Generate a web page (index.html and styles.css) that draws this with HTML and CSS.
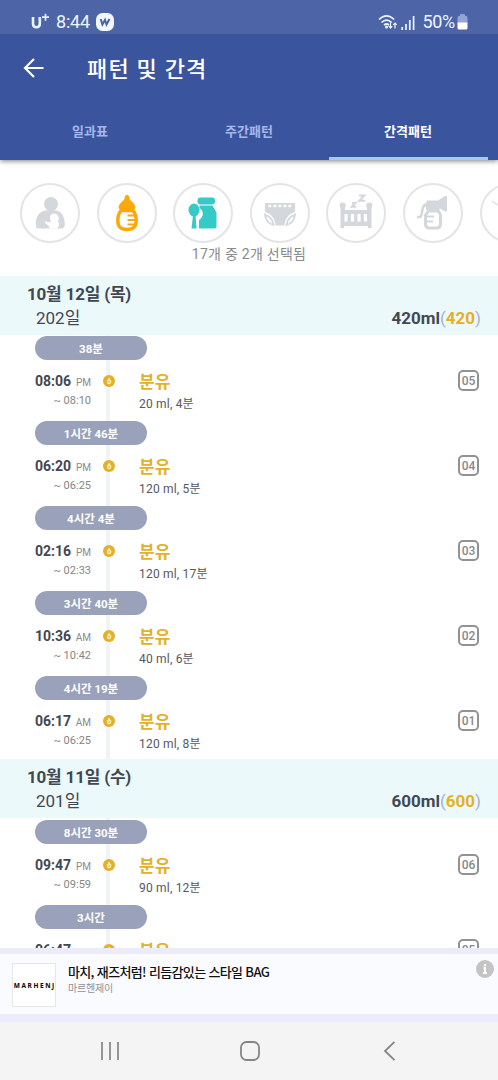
FILE: index.html
```html
<!DOCTYPE html>
<html lang="ko">
<head>
<meta charset="utf-8">
<title>패턴 및 간격</title>
<link rel="stylesheet" href="styles.css">
</head>
<body>
<svg class="defs" width="0" height="0">
  <symbol id="drop" viewBox="0 0 12 12"><circle cx="6" cy="6" r="6" fill="#e3b02a"/><path d="M5.7 2.7h.8l.3 1.5c1.1.5 1.5 1.3 1.5 2.4 0 1.7-.8 2.6-2.2 2.6S4 8.300 4 6.700c0-1.200.4-1.900 1.400-2.500z" fill="#fff3c4"/><path d="M5.400 5.800h1.400v1.900H5.400z" fill="#e3b02a"/></symbol>
</svg>
<div class="screen">
  <div class="status">
    <svg class="carrier" width="20" height="18" viewBox="0 0 20 18" fill="none" stroke="#e8f4ff"><path d="M2 4v6.500c0 2.600 1.300 3.800 3.400 3.800s3.400-1.200 3.400-3.800V4" stroke-width="2.600"/><path d="M11 4.200h7M14.500.7v7" stroke-width="1.700"/></svg>
    <span class="clock">8:44</span>
    <svg class="wapp" width="18" height="18" viewBox="0 0 18 18"><rect width="18" height="18" rx="6.500" fill="#f2f6ff"/><path d="M4.700 6l1.700 5.500L9 7l1.500 4.500L13.500 6" fill="none" stroke="#4c62a4" stroke-width="2"/></svg>
    <svg class="wifi" width="20" height="17" viewBox="0 0 20 17" fill="none" stroke="#eaf5ff" stroke-width="1.700"><path d="M1 5.500Q8.500-1.800 16.200 5.500M3.500 8.500Q8.500 3.700 13.700 8.500M6 11.200Q8.500 8.800 11 11.200"/><circle cx="8.500" cy="13" r=".7"/><path d="M12.500 8.500V14M10.800 12.200l1.700 1.900 1.700-1.900M17 14.500V9M15.200 10.800L17 9l1.800 1.800" stroke-width="1.200"/></svg>
    <svg class="signal" width="14" height="15" viewBox="0 0 14 15" stroke="#eaf5ff" stroke-width="1.700"><path d="M1.200 12v3M5 9v6M8.800 5v10M12.600 1v14"/></svg>
    <span class="percent">50%</span>
    <svg width="11" height="16" viewBox="0 0 11 16"><path d="M3 2V1q0-1 1-1h3q1 0 1 1v1h1q1.500 0 1.500 1.500V9H.5V3.500Q.5 2 2 2z" fill="#94a4d0"/><path d="M.5 8.500h10V14q0 1.500-1.500 1.500H2Q.5 15.500.5 14z" fill="#fff"/></svg>
  </div>
  <header class="appbar">
    <div class="title-row">
      <svg width="22" height="22" viewBox="0 0 22 22" fill="none" stroke="#fff" stroke-width="2.200"><path d="M20.500 11H2.500M11 2L2 11l9 9"/></svg>
      <h1>패턴 및 간격</h1>
    </div>
    <nav class="tabs"><span>일과표</span><span>주간패턴</span><span class="active">간격패턴</span></nav>
  </header>
  <section class="filters">
    <div class="circles">
      <div class="circle"><svg viewBox="0 0 60 60"><g fill="#d4d7db"><circle cx="31" cy="21" r="7"/><path d="M31 27c-9 0-14 3-15 11-.7 5 0 7.500 3 7.500h22c3.500 0 4.300-2 3.500-7.500-1.200-8-5-11-13.500-11z"/></g><path d="M25 37.500q3 3 6 1c-2-4-1-8 3-8s6 4 4 8c2 2 1 5-1 7H29c1-3-1-3-3.500-5z" fill="#fff"/></svg></div>
      <div class="circle"><svg viewBox="0 0 60 60"><path d="M27.500 15.500Q27.500 12 30 12t2.500 3.500c0 2 6 4.500 6 9.500l-2 2h-13l-2-2c0-5 6-7.500 6-9.500z" fill="#faa80a"/><path d="M24 27.500h12c2 2.500 3.200 6 3.200 10 0 6-2.200 9-9.200 9s-9.200-3-9.200-9c0-4 1.200-7.500 3.200-10z" fill="#fff" stroke="#faa80a" stroke-width="3.500"/><path d="M30.500 32.500H38M30.500 37H39M30.500 41.500H38" stroke="#faa80a" stroke-width="2"/></svg></div>
      <div class="circle"><svg viewBox="0 0 60 60" fill="#35c9c7"><rect x="24.500" y="14.500" width="17.500" height="7" rx="3"/><path d="M26.500 22.500h13l4 7v14q0 2-2 2H26V37c5-3 5-9 .5-12z"/><ellipse cx="21" cy="27" rx="5.500" ry="6.500"/><path d="M20 32h2.500l1 13.500h-5z"/></svg></div>
      <div class="circle"><svg viewBox="0 0 60 60"><path d="M15 20h30v9c-7 2-10 7-10.500 13.500h-9C25 36 22 31 15 29z" fill="#d4d7db"/><path d="M15 31.500c5 2 8 5.500 8.500 10.500-5-1.500-8-5-8.500-10.500zM45 31.500c-5 2-8 5.500-8.500 10.500 5-1.500 8-5 8.500-10.500z" fill="#fff" stroke="#d4d7db" stroke-width="1.800"/><path d="M18.500 23h23.500" stroke="#fff" stroke-width="2.600" stroke-dasharray="2.800 2.200"/></svg></div>
      <div class="circle"><svg viewBox="0 0 60 60"><g fill="#d4d7db"><path d="M14.500 22H19v5h22v-5h4.500v23H42v-2H18v2h-3.500z"/><circle cx="16.700" cy="22.500" r="3"/><circle cx="43.300" cy="22.500" r="3"/></g><path d="M20 31v7.500M26.500 31v7.500M33 31v7.500M39.500 31v7.500" stroke="#fff" stroke-width="3.200"/><path d="M33 12.500h5.300l-5 5.300h6M26 20h3.300l-3.300 3.700h4" stroke="#d4d7db" stroke-width="2.100" fill="none"/></svg></div>
      <div class="circle"><svg viewBox="0 0 60 60"><path d="M24 17.500h11l7-4.500h2v15.500h-2l-5-3-3 2.500H24q-3-5 0-10.500z" fill="#d4d7db"/><path d="M23.500 21.500c-6 0-3 11-6.500 12.500h-3" fill="none" stroke="#d4d7db" stroke-width="2.500"/><path d="M25.500 28h10l2 4v9q0 4-4 4h-7q-4 0-4-4v-9z" fill="#fff" stroke="#d4d7db" stroke-width="3"/><path d="M24 33.500h7M24 38.500h6" stroke="#d4d7db" stroke-width="1.800"/></svg></div>
      <div class="circle"><svg viewBox="0 0 60 60"><path d="M12 18l6 4" stroke="#e5e7e9" stroke-width="2"/></svg></div>
    </div>
    <p>17개 중 2개 선택됨</p>
  </section>
  <main class="log">
    <section class="day first">
      <div class="day-head"><h2>10월 12일 (목)</h2><div class="day-sub"><span>202일</span><b>420ml<i>(</i><em>420</em><i>)</i></b></div></div>
      <div class="entries">
        <div class="entry"><div class="gap">38분</div><div class="time"><b>08:06</b><small>PM</small><p>~ 08:10</p></div><svg class="dot"><use href="#drop"/></svg><div class="what"><b>분유</b><p>20 ml, 4분</p></div><span class="num">05</span></div>
        <div class="entry"><div class="gap">1시간 46분</div><div class="time"><b>06:20</b><small>PM</small><p>~ 06:25</p></div><svg class="dot"><use href="#drop"/></svg><div class="what"><b>분유</b><p>120 ml, 5분</p></div><span class="num">04</span></div>
        <div class="entry"><div class="gap">4시간 4분</div><div class="time"><b>02:16</b><small>PM</small><p>~ 02:33</p></div><svg class="dot"><use href="#drop"/></svg><div class="what"><b>분유</b><p>120 ml, 17분</p></div><span class="num">03</span></div>
        <div class="entry"><div class="gap">3시간 40분</div><div class="time"><b>10:36</b><small>AM</small><p>~ 10:42</p></div><svg class="dot"><use href="#drop"/></svg><div class="what"><b>분유</b><p>40 ml, 6분</p></div><span class="num">02</span></div>
        <div class="entry"><div class="gap">4시간 19분</div><div class="time"><b>06:17</b><small>AM</small><p>~ 06:25</p></div><svg class="dot"><use href="#drop"/></svg><div class="what"><b>분유</b><p>120 ml, 8분</p></div><span class="num">01</span></div>
      </div>
    </section>
    <section class="day">
      <div class="day-head"><h2>10월 11일 (수)</h2><div class="day-sub"><span>201일</span><b>600ml<i>(</i><em>600</em><i>)</i></b></div></div>
      <div class="entries">
        <div class="entry"><div class="gap">8시간 30분</div><div class="time"><b>09:47</b><small>PM</small><p>~ 09:59</p></div><svg class="dot"><use href="#drop"/></svg><div class="what"><b>분유</b><p>90 ml, 12분</p></div><span class="num">06</span></div>
        <div class="entry"><div class="gap">3시간</div><div class="time"><b>06:47</b></div><svg class="dot"><use href="#drop"/></svg><div class="what"><b>분유</b></div><span class="num">05</span></div>
      </div>
    </section>
  </main>
  <aside class="ad">
    <div class="brand"><span>MARHENJ</span></div>
    <div class="ad-copy"><strong>마치, 재즈처럼! 리듬감있는 스타일 BAG</strong><p>마르헨제이</p></div>
    <svg class="info" width="18" height="18" viewBox="0 0 18 18"><circle cx="9" cy="9" r="9" fill="#c4c4c6"/><path d="M9 4v2.200M7.500 8H9v5M7 13h4" stroke="#fff" stroke-width="2" fill="none"/></svg>
  </aside>
  <footer class="nav">
    <svg width="20" height="20" viewBox="0 0 20 20" stroke="#858585" stroke-width="1.700"><path d="M2 1v18M10 1v18M18 1v18"/></svg>
    <svg width="20" height="20" viewBox="0 0 20 20"><rect x="1" y="1" width="18" height="18" rx="5.500" fill="none" stroke="#858585" stroke-width="1.800"/></svg>
    <svg width="20" height="20" viewBox="0 0 20 20" fill="none" stroke="#858585" stroke-width="1.800"><path d="M14.500.8L5 10l9.500 9.200"/></svg>
  </footer>
</div>
</body>
</html>
```
FILE: styles.css
```css
* { box-sizing: border-box; margin: 0; padding: 0; }
body { font-family: Roboto, "Noto Sans CJK KR", sans-serif; color: #424753; background: #fff; }
svg { display: block; flex: none; }
.defs { position: absolute; }
.screen { width: 498px; height: 1080px; display: flex; flex-direction: column; overflow: hidden; white-space: nowrap; }
.status { height: 34px; flex: none; background: #4d64a7; color: #edf5ff; display: flex; align-items: center; padding: 10px 30px 0 31px; font-size: 18px; line-height: 24px; position: relative; z-index: 2; }
.clock { margin-left: 5px; width: 34px; letter-spacing: -.2px; }
.wapp { margin-left: 6px; }
.wifi { margin-left: auto; }
.signal { margin-left: 3px; }
.percent { margin: 0 2px 0 7px; letter-spacing: -.3px; }
.appbar { height: 126px; flex: none; background: #3a549d; color: #fff; box-shadow: 0 1px 5px rgba(0,0,0,.5); position: relative; z-index: 1; }
.title-row { height: 68px; display: flex; align-items: center; padding-left: 23px; }
h1 { margin: 3px 0 0 42px; font-size: 22px; font-weight: 500; line-height: 30px; letter-spacing: 1.200px; }
.tabs { height: 58px; display: grid; grid-template-columns: 159px 159px 159px; justify-content: center; text-align: center; font-size: 13px; font-weight: 700; line-height: 59px; color: #a6b7e8; }
.tabs span { height: 58px; }
.tabs .active { color: #fff; border-bottom: 3px solid #a0cde9; }
.filters { height: 116px; flex: none; padding-top: 23px; }
.circles { display: flex; gap: 16.600px; padding-left: 20px; overflow: hidden; }
.circle { width: 60px; height: 60px; flex: none; border: 2px solid #e3e4e6; border-radius: 50%; }
.circle svg { width: 60px; height: 60px; margin: -2px; }
.filters p { text-align: center; font-size: 14px; line-height: 20px; color: #8a8a8a; margin-top: 1px; letter-spacing: .25px; }
.log { height: 672px; flex: none; overflow: hidden; }
.day-head { height: 59px; background: #ecf9fa; padding: 7px 17px 0 27px; }
h2 { font-size: 17px; font-weight: 700; line-height: 23px; color: #424753; letter-spacing: -.2px; }
.day-sub { display: flex; justify-content: space-between; padding-left: 9px; font-size: 17px; line-height: 24px; }
.day-sub i { font-style: normal; font-weight: 400; color: #a5b2ca; }
.day-sub em { font-style: normal; color: #e3b127; }
.entries { padding-top: 2px; background: linear-gradient(#f2f3f7, #f2f3f7) 106px 0 / 4px 100% no-repeat; }
.first .entries { padding-top: 1px; height: 424px; }
.entry { height: 85px; display: grid; grid-template: 24px 61px / 67px 12px 335px 30px; padding-left: 35px; }
.gap { grid-column: 1 / -1; width: 112px; height: 24px; border-radius: 12px; background: #9aa1bb; color: #fff; text-align: center; font-size: 11.500px; line-height: 26px; font-weight: 700; }
.time { padding-top: 10px; width: 56px; display: grid; grid-template: 22px 17px / auto auto; justify-content: space-between; align-items: baseline; }
.time b { font-size: 14px; line-height: 22px; font-weight: 700; }
.time small { font-size: 10px; color: #8a8a8a; }
.time p { grid-column: 1 / -1; text-align: right; font-size: 11px; line-height: 17px; color: #858585; }
.dot { width: 12px; height: 12px; margin: 15px 0 0 1px; }
.what { padding: 10px 0 0 25px; }
.what b { display: block; color: #e3b127; font-size: 17px; line-height: 24px; }
.what p { font-size: 12px; line-height: 21px; color: #555861; letter-spacing: .2px; }
.num { margin: 10px 0 0 9px; width: 21px; height: 21px; border: 2px solid #929292; border-radius: 5px; color: #888; text-align: center; font-size: 12px; font-weight: 500; line-height: 18px; }
.ad { height: 74px; flex: none; background: #fafbfe; border-top: 6px solid #ebebfa; border-bottom: 8px solid #ebebfa; display: flex; padding: 9px 4px 0 12px; }
.brand { width: 44px; height: 44px; flex: none; background: #fff; border: 1px solid #e5e6ea; display: flex; align-items: center; justify-content: center; color: #000; font: 700 6.500px "Open Sans", sans-serif; letter-spacing: 1.600px; }
.brand span { margin-right: -1.600px; }
.ad-copy { margin-left: 12px; width: 300px; font-family: "Noto Sans CJK KR", sans-serif; color: #111; }
.ad-copy strong { display: block; font-size: 13px; line-height: 18px; font-weight: 500; letter-spacing: -.65px; }
.ad-copy p { font-size: 10px; line-height: 13px; color: #909095; letter-spacing: -.2px; }
.info { margin: -3px 0 0 auto; }
.nav { height: 58px; flex: none; background: #f4f4f4; display: flex; justify-content: space-between; padding: 19px 98px 0 100px; }
```
